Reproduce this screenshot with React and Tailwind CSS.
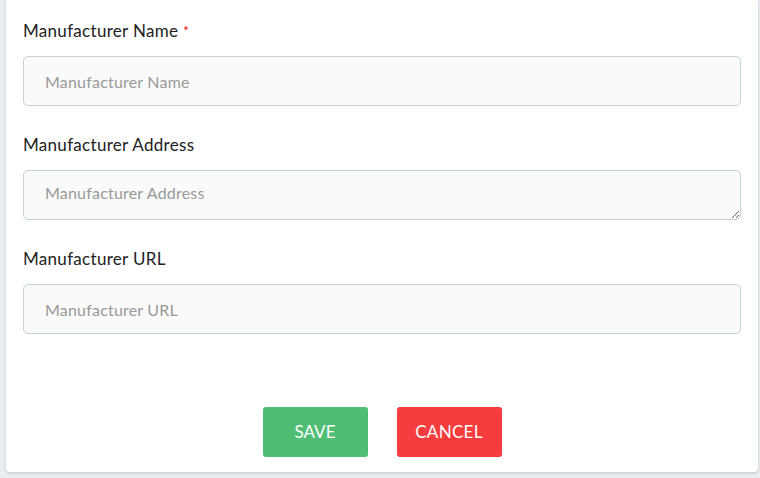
import React from 'react';

// Manufacturer form card
const fields = [
  { label: 'Manufacturer Name', required: true, type: 'input' },
  { label: 'Manufacturer Address', type: 'textarea' },
  { label: 'Manufacturer URL', type: 'input' },
];

const Field = ({ label, required, type, first }) => (
  <div className={first ? '' : 'mt-[27px]'}>
    <label className="block text-[17px] tracking-[0.3px] leading-[24px] text-[#222] mb-[13px]">
      {label}
      {required && <span className="text-[#e00] ml-[5px] align-top text-[13px]">*</span>}
    </label>
    {type === 'textarea' ? (
      <textarea
        placeholder={label}
        className="block w-full h-[50px] rounded-[5px] border border-[#c3d2dc] bg-[#fafafa] px-[21px] py-[12px] text-[16px] tracking-[0.2px] leading-[20px] text-[#333] placeholder:text-[#999] outline-none"
      />
    ) : (
      <input
        placeholder={label}
        className="block w-full h-[50px] rounded-[5px] border border-[#c3d2dc] bg-[#fafafa] px-[21px] text-[16px] tracking-[0.2px] text-[#333] placeholder:text-[#999] outline-none"
      />
    )}
  </div>
);

export default function App() {
  return (
    <div className="w-[760px] h-[478px] bg-[#e9eef3] pl-[6px] pr-[2px]" style={{ fontFamily: 'Lato, "Open Sans", sans-serif' }}>
      <div className="bg-white rounded-b-[4px] shadow-[0_1px_3px_rgba(0,0,0,0.18)] px-[17px] pt-[19px] pb-[15px]">
        {fields.map((f, i) => (
          <Field key={f.label} {...f} first={i === 0} />
        ))}
        <div className="flex justify-center gap-[29px] mt-[73px]">
          <button className="w-[105px] h-[50px] rounded-[3px] bg-[#4fbe74] text-white text-[17px]">SAVE</button>
          <button className="w-[105px] h-[50px] rounded-[3px] bg-[#f63c3c] text-white text-[17px] tracking-[0.3px]">CANCEL</button>
        </div>
      </div>
    </div>
  );
}
